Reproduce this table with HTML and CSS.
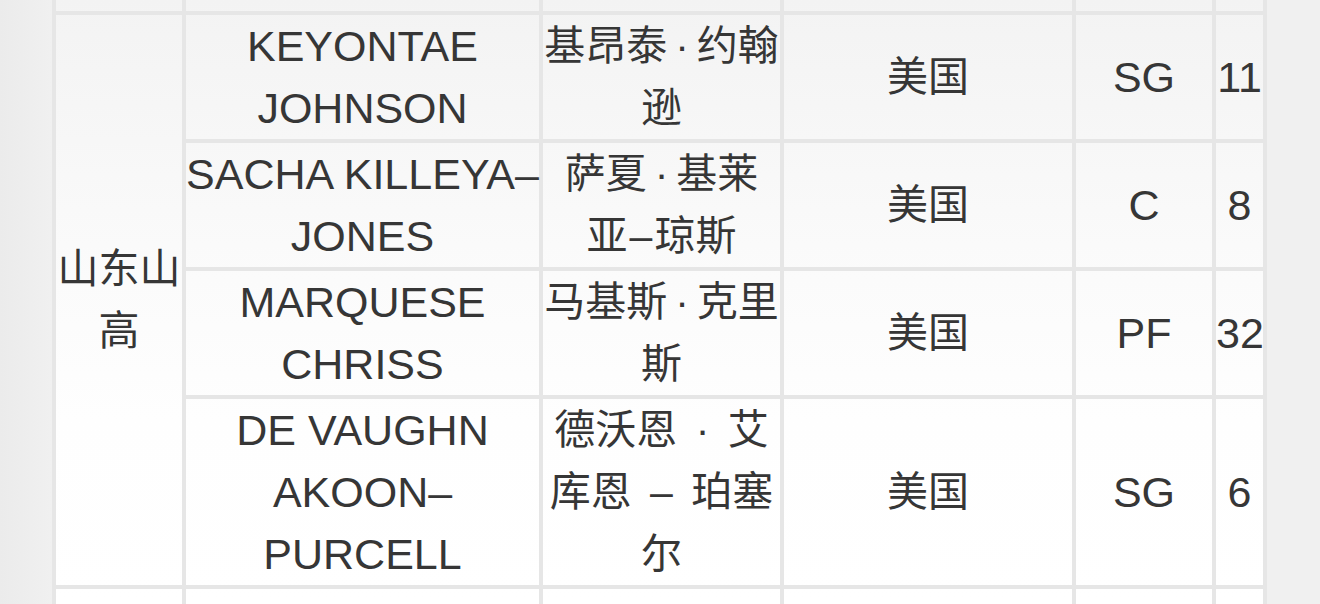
FILE: index.html
```html
<!DOCTYPE html>
<html lang="zh-CN">
<head>
<meta charset="utf-8">
<title>球员名单</title>
<link rel="stylesheet" href="styles.css">
</head>
<body>
<table class="roster">
  <colgroup>
    <col class="c-team">
    <col class="c-en">
    <col class="c-cn">
    <col class="c-nat">
    <col class="c-pos">
    <col class="c-num">
  </colgroup>
  <tbody>
    <tr class="row-cut-top">
      <td></td><td></td><td></td><td></td><td></td><td></td>
    </tr>
    <tr>
      <td class="team cjk" rowspan="4">山东山<br>高</td>
      <td>KEYONTAE<br>JOHNSON</td>
      <td class="cjk">基昂泰<span class="dot">·</span>约翰<br>逊</td>
      <td class="cjk">美国</td>
      <td>SG</td>
      <td>11</td>
    </tr>
    <tr>
      <td>SACHA KILLEYA–<br>JONES</td>
      <td class="cjk">萨夏<span class="dot">·</span>基莱<br>亚<span class="dash">–</span>琼斯</td>
      <td class="cjk">美国</td>
      <td>C</td>
      <td>8</td>
    </tr>
    <tr>
      <td>MARQUESE<br>CHRISS</td>
      <td class="cjk">马基斯<span class="dot">·</span>克里<br>斯</td>
      <td class="cjk">美国</td>
      <td>PF</td>
      <td>32</td>
    </tr>
    <tr>
      <td>DE VAUGHN<br>AKOON–<br>PURCELL</td>
      <td class="cjk">德沃恩 <span class="sep">·</span> 艾<br>库恩 <span class="sep">–</span> 珀塞<br>尔</td>
      <td class="cjk">美国</td>
      <td>SG</td>
      <td>6</td>
    </tr>
    <tr class="row-cut-bottom">
      <td></td><td></td><td></td><td></td><td></td><td></td>
    </tr>
  </tbody>
</table>
</body>
</html>
```

FILE: styles.css
```css
html, body {
  margin: 0;
  padding: 0;
  overflow: hidden;
}

body {
  width: 1320px;
  height: 604px;
  background: linear-gradient(to right, #ebebeb 0, #f0f0f0 52px, #f0f0f0 100%);
  font-family: "Liberation Sans", "Noto Sans CJK SC", sans-serif;
  color: #363636;
}

.roster {
  margin: -4px 0 0 52px;
  width: 1215px;
  table-layout: fixed;
  border-collapse: separate;
  border-spacing: 4px;
  background: #e6e6e6;
  font-size: 43px;
  line-height: 62px;
}

.c-team { width: 126px; }
.c-en   { width: 353px; }
.c-cn   { width: 237px; }
.c-nat  { width: 288px; }
.c-pos  { width: 136px; }
.c-num  { width: 47px; }

.roster td {
  padding: 0;
  text-align: center;
  vertical-align: middle;
  white-space: nowrap;
  background: linear-gradient(to bottom, #f3f3f3 0, #f7f7f7 140px, #fbfbfb 280px, #fefefe 420px, #ffffff 604px) fixed;
}

.roster td.cjk {
  font-size: 41px;
}

.roster td.team {
  white-space: normal;
}

.row-cut-top td {
  height: 11px;
  line-height: 11px;
}

.row-cut-bottom td {
  height: 62px;
}

.dot {
  margin: 0 8px;
}

.dash {
  margin: 0 2px;
}

.sep {
  margin: 0 7px;
}
```
